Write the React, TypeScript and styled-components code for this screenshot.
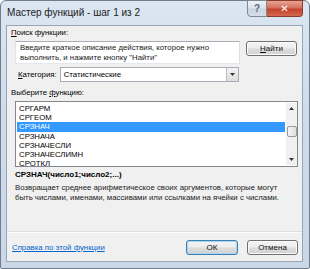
import styled, { createGlobalStyle } from "styled-components";

const GlobalStyle = createGlobalStyle`
  html, body {
    margin: 0;
    padding: 0;
    background: #ffffff;
  }
  body {
    font-family: "Liberation Sans", "DejaVu Sans", Arial, sans-serif;
  }
`;

const Window = styled.div`
  width: 310px;
  height: 269px;
  box-sizing: border-box;
  border: 1px solid #6f7d8c;
  border-radius: 6px 6px 2px 2px;
  background: linear-gradient(180deg, #dbe6f2 0%, #cfdceb 40%, #c9d7e7 100%);
  display: flex;
  flex-direction: column;
  padding: 0 6px 6px 5px;
`;

const TitleBar = styled.div`
  height: 24px;
  display: flex;
  align-items: center;
  justify-content: space-between;
`;

const Title = styled.div`
  font-size: 10px;
  color: #1b1b1b;
  padding-left: 1px;
  padding-bottom: 1px;
`;

const Caption = styled.div`
  display: flex;
  align-self: flex-start;
  margin-top: -1px;
`;

const CaptionButton = styled.div<{ $close?: boolean }>`
  height: 17px;
  width: ${(p) => (p.$close ? "36px" : "20px")};
  box-sizing: border-box;
  border: 1px solid ${(p) => (p.$close ? "#8a3a2c" : "#7c8896")};
  border-left-width: ${(p) => (p.$close ? "0" : "1px")};
  border-radius: ${(p) => (p.$close ? "0 0 4px 0" : "0 0 0 4px")};
  background: ${(p) =>
    p.$close
      ? "linear-gradient(180deg, #e8a495 0%, #d5715e 45%, #c5432c 55%, #d4684f 100%)"
      : "linear-gradient(180deg, #eef2f7 0%, #dbe3ec 45%, #c9d4e1 55%, #d6dfe9 100%)"};
  color: ${(p) => (p.$close ? "#ffffff" : "#5c6877")};
  font-size: 10px;
  font-weight: bold;
  display: flex;
  align-items: center;
  justify-content: center;
`;

const Panel = styled.div`
  flex: 1;
  background: #f0f0f0;
  border: 1px solid #98a5b5;
  display: flex;
  flex-direction: column;
  padding: 1px 4px 0 4px;
  font-size: 7.8px;
  color: #000;
`;

const Label = styled.div<{ $gap?: number }>`
  height: 12px;
  line-height: 12px;
  margin-top: ${(p) => p.$gap ?? 0}px;
`;

const SearchRow = styled.div`
  display: flex;
  align-items: flex-start;
  margin: 2px 0 0 4px;
  gap: 6px;
`;

const SearchBox = styled.div`
  width: 225px;
  height: 23px;
  box-sizing: border-box;
  border: 1px solid #abadb3;
  border-color: #abadb3 #dbdfe6 #e3e9ef #e2e3ea;
  background: #fff;
  padding: 1px 4px;
  line-height: 10px;
  color: #222;
`;

const Button = styled.div<{ $default?: boolean; $w: number }>`
  width: ${(p) => p.$w}px;
  height: 15px;
  box-sizing: border-box;
  border: 1px solid ${(p) => (p.$default ? "#3c7fb1" : "#707070")};
  border-radius: 3px;
  background: linear-gradient(180deg, #f4f4f4 0%, #ececec 48%, #dddddd 52%, #d2d2d2 100%);
  box-shadow: inset 0 0 0 1px ${(p) => (p.$default ? "#a6d5f5" : "#fbfbfb")};
  display: flex;
  align-items: center;
  justify-content: center;
  font-size: 8px;
  color: #111;
`;

const Underlined = styled.span`
  text-decoration: underline;
`;

const CategoryRow = styled.div`
  display: flex;
  align-items: center;
  margin: 3px 0 0 7px;
  gap: 3px;
`;

const Select = styled.div`
  width: 179px;
  height: 15px;
  box-sizing: border-box;
  border: 1px solid #a5acb5;
  background: #fff;
  display: flex;
  align-items: center;
  padding-left: 3px;
`;

const SelectText = styled.span`
  flex: 1;
`;

const DropButton = styled.div`
  width: 12px;
  height: 13px;
  box-sizing: border-box;
  border-left: 1px solid #b6bcc6;
  background: linear-gradient(180deg, #f3f3f3, #dcdcdc);
  display: flex;
  align-items: center;
  justify-content: center;
`;

const ListBox = styled.div`
  margin: 2px 0 0 4px;
  width: 283px;
  height: 66px;
  box-sizing: border-box;
  border: 1px solid #828790;
  background: #fff;
  display: flex;
  padding: 1px 0 1px 1px;
`;

const Items = styled.div`
  flex: 1;
  padding-top: 1px;
`;

const Item = styled.div<{ $selected?: boolean }>`
  height: 9.2px;
  line-height: 9.2px;
  padding-left: 2px;
  margin-right: 1px;
  background: ${(p) => (p.$selected ? "#3399ff" : "transparent")};
  color: ${(p) => (p.$selected ? "#fff" : "#000")};
`;

const ScrollBar = styled.div`
  width: 11px;
  background: #f0f0f0;
  display: flex;
  flex-direction: column;
  align-items: center;
  justify-content: space-between;
  padding: 4px 0;
  box-sizing: border-box;
`;

const Thumb = styled.div`
  width: 10px;
  height: 11px;
  box-sizing: border-box;
  border: 1px solid #9a9a9a;
  border-radius: 2px;
  background: linear-gradient(90deg, #f4f4f4, #e0e0e0);
  margin-top: 16px;
  margin-bottom: auto;
`;

const Signature = styled.div`
  margin: 3px 0 0 4px;
  font-weight: bold;
  font-size: 8px;
  height: 10px;
  line-height: 10px;
`;

const Description = styled.div`
  margin: 3px 0 0 4px;
  line-height: 9.5px;
  color: #222;
`;

const Separator = styled.div`
  margin-top: auto;
  height: 1px;
  margin-left: -4px;
  margin-right: -4px;
  background: #dfdfdf;
  border-bottom: 1px solid #fcfcfc;
`;

const Footer = styled.div`
  display: flex;
  align-items: center;
  height: 28px;
  padding-left: 1px;
  gap: 9px;
`;

const HelpLink = styled.a`
  color: #0066cc;
  text-decoration: underline;
  margin-right: auto;
`;

const Arrow = ({ up }: { up?: boolean }) => (
  <svg width="5" height="3" viewBox="0 0 5 3">
    <path d={up ? "M2.5 0 L5 3 L0 3 Z" : "M0 0 L5 0 L2.5 3 Z"} fill="#333" />
  </svg>
);

const functions = ["СРГАРМ", "СРГЕОМ", "СРЗНАЧ", "СРЗНАЧА", "СРЗНАЧЕСЛИ", "СРЗНАЧЕСЛИМН", "СРОТКЛ"];

export default function App() {
  return (
    <>
      <GlobalStyle />
      <Window>
        <TitleBar>
          <Title>Мастер функций - шаг 1 из 2</Title>
          <Caption>
            <CaptionButton>?</CaptionButton>
            <CaptionButton $close>✕</CaptionButton>
          </Caption>
        </TitleBar>
        <Panel>
          <Label>
            <Underlined>П</Underlined>оиск функции:
          </Label>
          <SearchRow>
            <SearchBox>
              Введите краткое описание действия, которое нужно
              <br />
              выполнить, и нажмите кнопку "Найти"
            </SearchBox>
            <Button $w={51}>
              <Underlined>Н</Underlined>айти
            </Button>
          </SearchRow>
          <CategoryRow>
            <span>
              <Underlined>К</Underlined>атегория:
            </span>
            <Select>
              <SelectText>Статистические</SelectText>
              <DropButton>
                <Arrow />
              </DropButton>
            </Select>
          </CategoryRow>
          <Label $gap={5}>
            Выберите <Underlined>ф</Underlined>ункцию:
          </Label>
          <ListBox>
            <Items>
              {functions.map((f) => (
                <Item key={f} $selected={f === "СРЗНАЧ"}>
                  {f}
                </Item>
              ))}
            </Items>
            <ScrollBar>
              <Arrow up />
              <Thumb />
              <Arrow />
            </ScrollBar>
          </ListBox>
          <Signature>СРЗНАЧ(число1;число2;...)</Signature>
          <Description>
            Возвращает среднее арифметическое своих аргументов, которые могут
            <br />
            быть числами, именами, массивами или ссылками на ячейки с числами.
          </Description>
          <Separator />
          <Footer>
            <HelpLink href="#">Справка по этой функции</HelpLink>
            <Button $default $w={52}>ОК</Button>
            <Button $w={51}>Отмена</Button>
          </Footer>
        </Panel>
      </Window>
    </>
  );
}
